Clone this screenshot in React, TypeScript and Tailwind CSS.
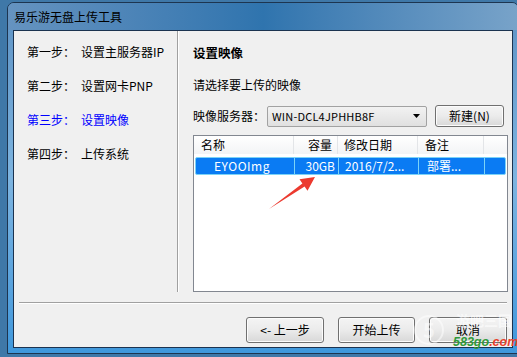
import React from "react";

const font = { fontFamily: '"Noto Sans CJK SC", "Liberation Sans", sans-serif' };

const steps = [
  { label: "第一步：", text: "设置主服务器IP", active: false },
  { label: "第二步：", text: "设置网卡PNP", active: false },
  { label: "第三步：", text: "设置映像", active: true },
  { label: "第四步：", text: "上传系统", active: false },
];

const Btn = ({ children, className = "" }: { children: React.ReactNode; className?: string }) => (
  <div
    className={`flex items-center justify-center rounded-[3px] border border-[#707070] bg-gradient-to-b from-[#f4f4f4] via-[#ebebeb] to-[#d8d8d8] text-[12px] text-black shadow-[inset_0_0_0_1px_#fcfcfc] ${className}`}
  >
    {children}
  </div>
);

export default function App() {
  return (
    <div className="relative h-[357px] w-[517px] overflow-hidden bg-[#3f78a8]" style={font}>
      <div className="ml-[7px] mt-[2px] flex h-[352px] w-[512px] flex-col rounded-t-[7px] border border-[#1d3550] bg-gradient-to-b from-[#5d92c4] via-[#7db4e0] to-[#3f98dc]">
        {/* title bar */}
        <div className="flex h-[27px] items-center rounded-t-[6px] bg-gradient-to-r from-[#6593c0] via-[#2f74ae] to-[#78a3c9] pl-[6px] pt-[1px] text-[12px] text-black">
          易乐游无盘上传工具
        </div>

        {/* client */}
        <div className="ml-[5px] mr-[5px] flex h-[318px] flex-col border border-[#1b3350] bg-[#f0f0f0]">
          <div className="flex h-[261px]">
            <div className="flex w-[163px] flex-col pl-[13px] pt-[4px] text-[12px]">
              {steps.map((s) => (
                <div
                  key={s.label}
                  className={`flex h-[34px] items-center ${s.active ? "text-[#0000ff]" : "text-black"}`}
                >
                  <span className="w-[54px]">{s.label}</span>
                  <span>{s.text}</span>
                </div>
              ))}
            </div>
            <div className="w-[1px] bg-[#a0a0a0]" />
            <div className="w-[1px] bg-white" />

            <div className="flex flex-1 flex-col pl-[14px] pr-[4px] text-[12px] text-black">
              <div className="mt-[14px] h-[16px] text-[12.5px] font-bold leading-[16px]">设置映像</div>
              <div className="mt-[16px] h-[16px] leading-[16px]">请选择要上传的映像</div>

              <div className="mt-[12px] flex h-[22px] items-center">
                <span className="w-[74px]">映像服务器：</span>
                <div className="flex h-[21px] w-[160px] items-center justify-between rounded-[2px] border border-[#a2a2a2] bg-gradient-to-b from-[#f2f2f2] to-[#e0e0e0] pl-[4px] pr-[6px]">
                  <span className="text-[11px] tracking-[0.2px]">WIN-DCL4JPHHB8F</span>
                  <svg width="7" height="4" viewBox="0 0 7 4">
                    <path d="M0 0h7L3.5 4z" fill="#000" />
                  </svg>
                </div>
                <Btn className="ml-[8px] h-[22px] w-[69px]">新建(N)</Btn>
              </div>

              <div className="mt-[8px] flex h-[157px] flex-col border border-[#828790] bg-white">
                <div className="flex h-[18px] bg-gradient-to-b from-white to-[#f3f4f6] text-[12px]">
                  <div className="flex w-[100px] items-center border-r border-[#e3e5e8] pl-[7px]">名称</div>
                  <div className="flex w-[44px] items-center justify-end border-r border-[#e3e5e8] pr-[5px]">容量</div>
                  <div className="flex w-[80px] items-center border-r border-[#e3e5e8] pl-[6px]">修改日期</div>
                  <div className="flex w-[66px] items-center border-r border-[#e3e5e8] pl-[7px]">备注</div>
                  <div className="flex-1" />
                </div>
                <div className="mx-[1px] mt-[3px] flex h-[18px] overflow-hidden rounded-[2px] border border-[#7bd3f7] bg-[#0a7bf3] text-[12px] text-white">
                  <div className="flex w-[99px] items-center border-r border-[#7bd3f7] pl-[18px] tracking-[0.5px]">EYOOImg</div>
                  <div className="flex w-[44px] items-center justify-end border-r border-[#7bd3f7] pr-[3px]">30GB</div>
                  <div className="flex w-[80px] items-center border-r border-[#7bd3f7] pl-[6px]">2016/7/2...</div>
                  <div className="flex w-[66px] items-center border-r border-[#7bd3f7] pl-[8px]">部署...</div>
                  <div className="flex-1" />
                </div>
              </div>
            </div>
          </div>

          <div className="mx-[5px] mt-[10px] h-[1px] bg-[#a0a0a0]" />
          <div className="mx-[5px] h-[1px] bg-white" />

          <div className="mt-[13px] flex justify-end gap-[14px] pr-[5px]">
            <Btn className="h-[26px] w-[78px]">&lt;- 上一步</Btn>
            <Btn className="h-[26px] w-[77px]">开始上传</Btn>
            <Btn className="h-[26px] w-[78px]">取消</Btn>
          </div>
        </div>
      </div>

      {/* red arrow overlay */}
      <svg className="pointer-events-none absolute left-0 top-0" width="517" height="357">
        <polygon
          points="269,209 302.4,183.4 299.5,179.3 315,177 307.5,190.7 304.6,186.6"
          fill="#ec3a2f"
        />
      </svg>

      {/* watermark */}
      <div className="pointer-events-none absolute left-[414px] top-[315px] flex h-[30px] w-[30px] items-center justify-center rounded-full border-2 border-white/50 text-[20px] font-bold text-white/50">
        5
      </div>
      <div className="pointer-events-none absolute left-[456px] top-[312px] text-[14px] font-bold leading-[16px] text-white/60">
        游吧三国
      </div>
      <div
        className="pointer-events-none absolute left-[453px] top-[335px] text-[12.5px] font-bold italic leading-[14px]"
        style={{ fontFamily: '"Liberation Sans", sans-serif' }}
      >
        <span className="text-[#2f9a3a]">583go</span>
        <span className="text-[#e8402a]">.com</span>
      </div>
    </div>
  );
}
